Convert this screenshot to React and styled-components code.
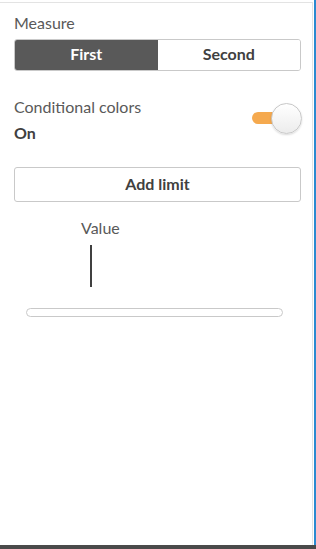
import React from "react";
import styled, { createGlobalStyle } from "styled-components";

const GlobalStyle = createGlobalStyle`
    html, body {
        margin: 0;
        padding: 0;
        background: #ffffff;
    }
    body {
        font-family: Lato, "Open Sans", "Liberation Sans", sans-serif;
    }
`

const Page = styled.div`
    display: flex;
    flex-direction: column;
    width: 316px;
    height: 549px;
    background: #ffffff;
`
const Frame = styled.div`
    flex: 1;
    display: flex;
    padding-top: 2px;
    border-right: 2px solid #2b8ad0;
`
const Panel = styled.div`
    flex: 1;
    display: flex;
    flex-direction: column;
    padding: 11px 11px 0 14px;
    border-top: 1px solid #e3e3e3;
    border-left: 1px solid #cfcfcf;
    border-right: 1px solid #e3e3e3;
    margin-right: 1px;
    margin-left: -1px;
`
const Footer = styled.div`
    height: 4px;
    background: #4a4a4a;
`
const Label = styled.div`
    font-size: 16px;
    line-height: 18px;
    color: ${(p) => (p.$bold ? "#404040" : "#595959")};
    font-weight: ${(p) => (p.$bold ? 700 : 400)};
`
const Segmented = styled.div`
    display: flex;
    margin-top: 7px;
    height: 32px;
    border: 1px solid #c9c9c9;
    border-radius: 3px;
    overflow: hidden;
    box-sizing: border-box;
`
const Segment = styled.button`
    flex: 1;
    border: none;
    margin: 0;
    padding: 0 0 3px;
    font-family: inherit;
    font-size: 16px;
    font-weight: 700;
    cursor: pointer;
    background: ${(p) => (p.$active ? "#595959" : "#ffffff")};
    color: ${(p) => (p.$active ? "#ffffff" : "#404040")};
`
const ToggleRow = styled.div`
    display: flex;
    justify-content: space-between;
    align-items: flex-start;
    margin-top: 27px;
`
const ToggleText = styled.div`
    display: flex;
    flex-direction: column;
    gap: 8px;
`
const Switch = styled.div`
    position: relative;
    width: 50px;
    height: 30px;
    margin-top: 5px;
    margin-right: -1px;
`
const Track = styled.div`
    position: absolute;
    left: 0;
    top: 9px;
    width: 34px;
    height: 12px;
    border-radius: 6px;
    background: #f5a94e;
`
const Knob = styled.div`
    position: absolute;
    right: 0;
    top: 0;
    width: 29px;
    height: 29px;
    border-radius: 50%;
    background: linear-gradient(#ffffff, #ececec);
    border: 1px solid #c8c8c8;
    box-shadow: 0 1px 2px rgba(0, 0, 0, 0.15);
`
const Button = styled.button`
    margin-top: 25px;
    height: 35px;
    padding: 0 0 3px;
    border: 1px solid #c9c9c9;
    border-radius: 3px;
    background: #ffffff;
    font-family: inherit;
    font-size: 16px;
    font-weight: 700;
    color: #404040;
    cursor: pointer;
`
const Limits = styled.div`
    display: flex;
    flex-direction: column;
    padding: 0 18px 0 12px;
    margin-top: 17px;
`
const Marker = styled.div`
    display: flex;
    flex-direction: column;
    align-items: flex-start;
    margin-left: 55px;
`
const Tick = styled.div`
    width: 2px;
    height: 42px;
    margin: 8px 0 0 9px;
    background: #404040;
`
const Slider = styled.div`
    height: 9px;
    margin-top: 21px;
    border: 1px solid #c9c9c9;
    border-radius: 5px;
    box-sizing: border-box;
`

export default function App() {
    return (
        <Page>
            <GlobalStyle />
            <Frame>
                <Panel>
                    <Label>Measure</Label>
                    <Segmented>
                        <Segment $active>First</Segment>
                        <Segment>Second</Segment>
                    </Segmented>
                    <ToggleRow>
                        <ToggleText>
                            <Label>Conditional colors</Label>
                            <Label $bold>On</Label>
                        </ToggleText>
                        <Switch>
                            <Track />
                            <Knob />
                        </Switch>
                    </ToggleRow>
                    <Button>Add limit</Button>
                    <Limits>
                        <Marker>
                            <Label>Value</Label>
                            <Tick />
                        </Marker>
                        <Slider />
                    </Limits>
                </Panel>
            </Frame>
            <Footer />
        </Page>
    );
}
